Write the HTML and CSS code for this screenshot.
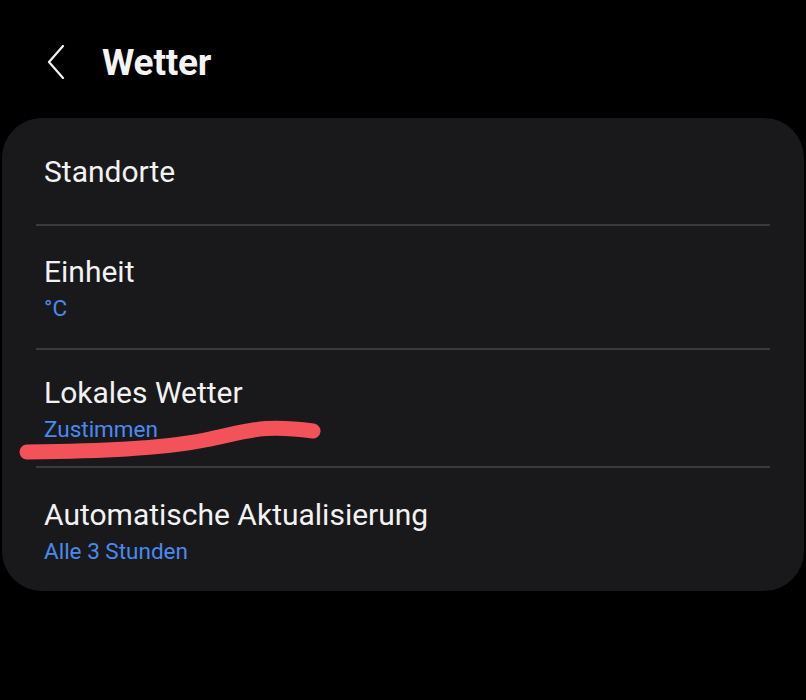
FILE: index.html
```html
<!DOCTYPE html>
<html>
<head>
    <meta charset="utf-8">
    <title>Wetter</title>
    <link rel="stylesheet" href="styles.css">
</head>
<body>
    <div class="screen">
        <div class="top-bar">
            <button class="back-button" aria-label="Zurück">
                <svg width="18" height="34" viewBox="0 0 18 34">
                    <path d="M16 1 L2 17 L16 33" fill="none" stroke="#f2f2f2" stroke-width="2.2" stroke-linecap="round" stroke-linejoin="round"/>
                </svg>
            </button>
            <h1>Wetter</h1>
        </div>
        <div class="settings-card">
            <div class="setting-row single">
                <div class="setting-title">Standorte</div>
            </div>
            <div class="divider"></div>
            <div class="setting-row">
                <div class="setting-title">Einheit</div>
                <div class="setting-value">°C</div>
            </div>
            <div class="divider"></div>
            <div class="setting-row row-local">
                <div class="setting-title">Lokales Wetter</div>
                <div class="setting-value">Zustimmen</div>
            </div>
            <div class="divider"></div>
            <div class="setting-row row-auto">
                <div class="setting-title">Automatische Aktualisierung</div>
                <div class="setting-value">Alle 3 Stunden</div>
            </div>
        </div>
        <!-- marker scribble drawn over the screenshot -->
        <svg class="scribble" width="806" height="700" viewBox="0 0 806 700">
            <path d="M27 452 C 100 451, 160 449, 205 440 S 262 424, 313 431" fill="none" stroke="#f4525a" stroke-width="15" stroke-linecap="round"/>
        </svg>
    </div>
</body>
</html>
```

FILE: styles.css
```css
body {
    margin: 0;
    padding: 0;
    background-color: #000;
    font-family: Roboto, "Noto Sans", sans-serif;
    color: #f2f2f2;
}
.screen {
    position: relative;
    width: 806px;
    height: 700px;
    overflow: hidden;
}
.top-bar {
    display: flex;
    align-items: center;
    height: 118px;
    padding: 6px 0 0 47px;
    box-sizing: border-box;
}
.back-button {
    background: transparent;
    border: none;
    padding: 0;
    margin: 0 37px 0 0;
    width: 18px;
    height: 34px;
    display: flex;
}
h1 {
    margin: 0;
    font-size: 37px;
    font-weight: 700;
    color: #f4f4f4;
    letter-spacing: -0.2px;
}
.settings-card {
    background-color: #19191b;
    margin: 0 2px;
    border-radius: 40px;
    padding: 0 34px;
}
.setting-row {
    padding: 28px 8px 26px;
}
.setting-row.single {
    padding: 36px 8px 34px;
}
.setting-row.row-local {
    padding: 25px 8px 23px;
}
.setting-row.row-auto {
    padding: 29px 8px 26px;
}
.setting-title {
    font-size: 30px;
    line-height: 36px;
    color: #f2f2f2;
}
.setting-value {
    margin-top: 4px;
    font-size: 22.5px;
    line-height: 28px;
    color: #4a8af0;
}
.divider {
    height: 2px;
    background-color: #3a3a3c;
}
.scribble {
    position: absolute;
    left: 0;
    top: 0;
    pointer-events: none;
}
```
